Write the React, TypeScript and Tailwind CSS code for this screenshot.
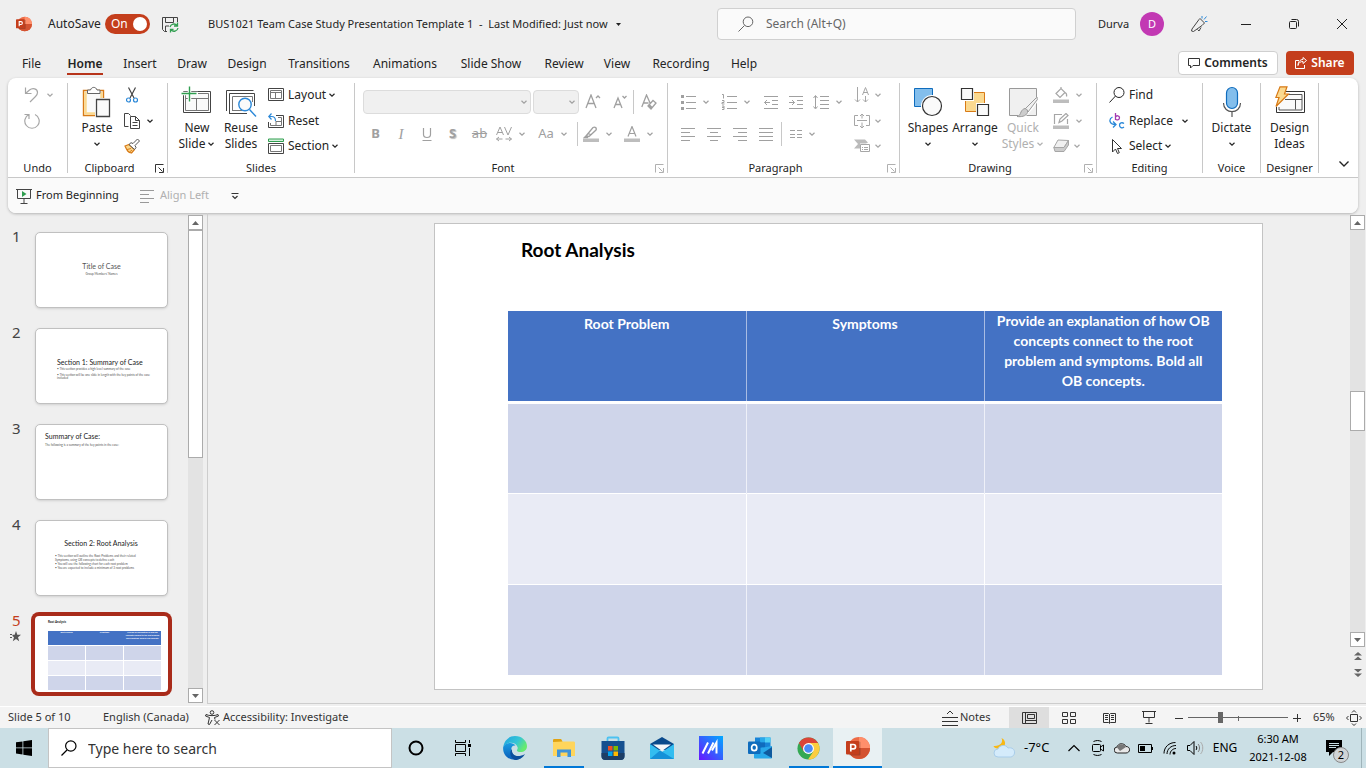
import React from "react";

type IconProps = { w?: number; h?: number; className?: string; children: React.ReactNode };

// stroke icon base, everything in the ribbon is drawn on this
const Icon = ({ w = 16, h = 16, className = "", children }: IconProps) => (
  <svg width={w} height={h} viewBox={`0 0 ${w} ${h}`} fill="none" stroke="currentColor" className={`shrink-0 ${className}`} aria-hidden="true">
    {children}
  </svg>
);

const Chevron = ({ className = "" }: { className?: string }) => (
  <Icon w={8} h={8} className={className}>
    <path d="M1.5 2.8 4 5.2l2.5-2.4" strokeWidth="1.2" />
  </Icon>
);

const Launcher = ({ dim }: { dim?: boolean }) => (
  <button aria-label="More options" className={`w-4 flex items-center justify-end pr-[3px] ${dim ? "text-[#b0b0b0]" : "text-[#333]"}`}>
    <Icon w={9} h={9}>
      <path d="M.5 8.5v-8h8M3.5 3.5l4 4M8.5 4v4.5H4" />
    </Icon>
  </button>
);

const PowerPointLogo = ({ size }: { size: number }) => (
  <svg width={size} height={size} viewBox="0 0 24 24" aria-hidden="true" className="shrink-0">
    <circle cx="13" cy="12" r="11" fill="#ed6c47" />
    <path d="M13 1a11 11 0 0 1 11 11H13z" fill="#ff8f6b" />
    <path d="M2 12h22a11 11 0 0 1-22 0z" fill="#d35230" />
    <rect x="3" y="5.5" width="11.5" height="14" rx="1" fill="#000" opacity=".2" />
    <rect x="0" y="5" width="13" height="13.5" rx="1" fill="#c43e1c" />
    <path d="M4.8 15.5v-7h2.6a2.1 2.1 0 0 1 0 4.3H4.8" fill="none" stroke="#fff" strokeWidth="1.7" />
  </svg>
);

type GroupProps = { label: string; width: string; launcher?: "on" | "dim"; children: React.ReactNode };

const Group = ({ label, width, launcher, children }: GroupProps) => (
  <>
    <section aria-label={label} className={`flex flex-col shrink-0 ${width}`}>
      <div className="flex h-[78px] pt-px">{children}</div>
      <div className="flex h-[18px] text-[11px] leading-[18px]">
        <span className="flex-1 text-center whitespace-nowrap">{label}</span>
        {launcher && <Launcher dim={launcher === "dim"} />}
      </div>
    </section>
    <div className="w-px shrink-0 mt-0.5 mb-1 bg-[#c8c8c8]" />
  </>
);

type BigProps = { icon: React.ReactNode; lines: string[]; width: string; arrow?: boolean; dim?: boolean };

const BigButton = ({ icon, lines, width, arrow, dim }: BigProps) => (
  <button disabled={dim} className={`flex flex-col items-center shrink-0 pt-1 leading-4 whitespace-nowrap ${width} ${dim ? "text-[#b0b0b0]" : ""}`}>
    <span className="flex h-[32px] items-center mb-0.5">{icon}</span>
    <span>{lines[0]}</span>
    <span className="flex h-4 items-center gap-0.5">
      {lines[1]}
      {arrow && <Chevron />}
    </span>
  </button>
);

type SmallProps = { icon: React.ReactNode; text?: string; name?: string; arrow?: boolean; gap?: string; dim?: boolean };

const SmallButton = ({ icon, text, name, arrow, gap = "gap-0.5", dim }: SmallProps) => (
  <button disabled={dim} aria-label={name} className={`flex h-[26px] items-center whitespace-nowrap ${gap} ${dim ? "text-[#a6a6a6]" : ""}`}>
    <span className="flex items-center gap-1">
      {icon}
      {text}
    </span>
    {arrow && <Chevron />}
  </button>
);

const Tool = ({ name, width, children }: { name: string; width: string; children: React.ReactNode }) => (
  <button disabled aria-label={name} className={`flex h-8 shrink-0 items-center justify-center gap-[6px] ${width}`}>
    {children}
  </button>
);

const Rule = () => <div className="w-px h-6 shrink-0 bg-[#c8c8c8]" />;

const tabs = [
  { name: "File", w: "w-[47px]" },
  { name: "Home", w: "w-[60px]" },
  { name: "Insert", w: "w-[50px]" },
  { name: "Draw", w: "w-[54px]" },
  { name: "Design", w: "w-[56px]" },
  { name: "Transitions", w: "w-[88px]" },
  { name: "Animations", w: "w-[84px]" },
  { name: "Slide Show", w: "w-[88px]" },
  { name: "Review", w: "w-[58px]" },
  { name: "View", w: "w-[48px]" },
  { name: "Recording", w: "w-[80px]" },
  { name: "Help", w: "w-[46px]" },
];

const TitleBar = () => (
  <header className="flex h-12 shrink-0 items-center text-[12px]">
    <div className="flex flex-1 items-center pl-4 whitespace-nowrap">
      <PowerPointLogo size={16} />
      <label htmlFor="autosave" className="ml-4 w-[57px]">AutoSave</label>
      <label htmlFor="autosave" className="flex w-[45px] h-5 items-center justify-between rounded-full bg-[#c43e1c] pl-[6px] pr-[3px] text-white">
        On
        <span className="size-[14px] rounded-full bg-white" />
      </label>
      <input id="autosave" type="checkbox" defaultChecked className="sr-only" />
      <button aria-label="Save" className="ml-3 w-[46px]">
        <Icon w={17} h={17}>
          <path d="M15.5 6V1.5H.5v12l2 2H5M3.5 1.5v5h8v-5M3.5 15v-5H7" stroke="#444" />
          <path d="M8 11a4 4 0 0 1 7-1.5M15.5 6.500v3.500h-3.500M16 12a4 4 0 0 1-7 1.800M8.5 16.500V13.500h3" stroke="#2f9e4f" strokeWidth="1.3" />
        </Icon>
      </button>
      <button className="flex items-center gap-2 text-[11px]">
        <span className="whitespace-pre">BUS1021 Team Case Study Presentation Template 1  -  Last Modified: Just now</span>
        <svg width="5" height="3" viewBox="0 0 5 3" aria-hidden="true"><path d="M0 0h5L2.5 3z" fill="#222" /></svg>
      </button>
    </div>
    <div className="flex w-[359px] h-8 items-center gap-3 rounded-[4px] border border-[#d0d0d0] bg-[#fafafa] pl-5 text-[#666]">
      <Icon>
        <circle cx="10" cy="5.8" r="4.8" />
        <path d="m6.5 9.5-6 6" />
      </Icon>
      <input aria-label="Search" placeholder="Search (Alt+Q)" className="flex-1 bg-transparent outline-none placeholder:text-[#666]" />
    </div>
    <div className="flex w-[290px] items-center pl-[22px]">
      <span className="w-[42px] text-[11px]">Durva</span>
      <button aria-label="Account" className="size-6 rounded-full bg-[#c239b3] text-white text-[11px]">D</button>
      <button aria-label="Coming soon" className="ml-[26px] w-[51px]">
        <Icon w={18} h={18}>
          <path d="M10 3.5 14.5 8 12 10.500 3.500 16.500 1.500 16 2 14 9 4.500zM7.500 14.500l1.500 1.500 2-3.500" stroke="#444" />
          <path d="M12 3.5V1M14 4.5l2.500-3M15 6.500h2.500" stroke="#2b88d8" />
        </Icon>
      </button>
      <button aria-label="Minimize" className="w-12"><Icon w={10} h={10}><path d="M0 5.5h10" stroke="#222" /></Icon></button>
      <button aria-label="Restore" className="w-12">
        <Icon w={10} h={10}><path d="M.5 3.5a1 1 0 0 1 1-1h5a1 1 0 0 1 1 1v5a1 1 0 0 1-1 1h-5a1 1 0 0 1-1-1zM2.5.5h5a2 2 0 0 1 2 2v5" stroke="#222" /></Icon>
      </button>
      <button aria-label="Close"><Icon w={10} h={10}><path d="m0 0 10 10M10 0 0 10" stroke="#222" /></Icon></button>
    </div>
  </header>
);

const TabBar = () => (
  <nav className="flex h-[30px] shrink-0 items-start pl-2 pr-3 text-[12px]">
    {tabs.map((t) => (
      <button key={t.name} className={`flex h-[27px] justify-center shrink-0 whitespace-nowrap ${t.w}`}>
        <span className={t.name === "Home" ? "h-[27px] leading-8 border-b-2 border-[#b7341a] font-semibold" : "leading-8"}>{t.name}</span>
      </button>
    ))}
    <div className="flex flex-1 justify-end gap-2 pt-[3px] font-semibold">
      <button className="flex w-[100px] h-6 items-center justify-center gap-1 rounded-[4px] border border-[#cfcfcf] bg-white">
        <Icon w={12} h={12}><path d="M.5 1.5h11v7H5L2.5 11V8.5h-2z" stroke="#333" /></Icon>
        Comments
      </button>
      <button className="flex w-[68px] h-6 items-center justify-center gap-1 rounded-[4px] bg-[#c43e1c] text-white">
        <Icon w={12} h={12}><path d="M4 3.5H.5v8h9V8M3 8.5c.5-3 2.5-4 5-4v2l3.5-3L8 .5v2C5 2.5 3 5 3 8.5z" /></Icon>
        Share
      </button>
    </div>
  </nav>
);

const PasteIcon = () => (
  <Icon w={30} h={32}>
    <path d="M1.5 4.5h20v25h-20z" fill="#fafafa" stroke="#d87a16" strokeWidth="1.4" />
    <path d="M3.5 6v22M19.5 6v22M3.5 27.500h16" stroke="#fbd98f" strokeWidth="2.5" />
    <path d="M5.5 7.5v-3.500h3c1-3.500 5.500-3.500 6.500 0h3v3.500z" fill="#fff" stroke="#666" />
    <path d="M13 12h16v20H13z" fill="#fff" stroke="none" />
    <path d="M14.5 13.5h13v17h-13z" fill="#fafafa" stroke="#444" strokeWidth="1.3" />
  </Icon>
);

const NewSlideIcon = () => (
  <Icon w={32} h={32}>
    <path d="M2.5 5.5h27v21h-27z" stroke="#444" />
    <path d="M4.5 7.5h23v17h-23zM4.5 12.5h23M15.5 12.5v12" fill="#fafafa" stroke="#777" />
    <path d="M8.5 1v16M1 7.5h16" stroke="#fff" strokeWidth="3.5" />
    <path d="M8.5.5v15M.5 7.5h15" stroke="#2f9e4f" strokeWidth="1.4" />
  </Icon>
);

const ReuseIcon = () => (
  <Icon w={32} h={32}>
    <path d="M1.5 25V4.5h27" stroke="#444" />
    <path d="M4 27.5h18M4.5 27V7.5h25V20" stroke="#444" />
    <path d="M7 24.5h10M7.5 24V10.5h20V16" stroke="#777" />
    <circle cx="20" cy="18.5" r="6.2" fill="#fafafa" stroke="#2b88d8" strokeWidth="1.4" />
    <path d="m24.5 23.5 6.500 7" stroke="#2b88d8" strokeWidth="1.4" />
  </Icon>
);

// 4 horizontal strokes, used by the align buttons
const Lines = ({ d }: { d: string }) => (
  <Icon><path d={d} /></Icon>
);

const Ribbon = () => (
  <div className="mx-2 shrink-0 overflow-hidden rounded-lg bg-white text-[12px] text-[#242424] shadow-[0_1px_3px_rgba(0,0,0,0.25)]">
    <div className="flex h-[100px] border-b border-[#c8c8c8] pt-[3px]">
      <Group label="Undo" width="w-[59px]">
        <div className="flex flex-col pl-4">
          <SmallButton dim arrow gap="gap-1.5" name="Undo" icon={<Icon><path d="M1.5.5v6h6M1.5 6.5 5.500 3c3-2.500 8-1.500 8 2.500 0 2-1 3-2 4L6 15" strokeWidth="1.2" /></Icon>} />
          <SmallButton dim name="Redo" icon={<Icon><path d="M.5 1.5H5v4.500M11 1.500a7.200 7.200 0 1 1-6 0" strokeWidth="1.2" /></Icon>} />
        </div>
      </Group>
      <Group label="Clipboard" width="w-[99px]" launcher="on">
        <BigButton width="w-[58px]" icon={<PasteIcon />} lines={["Paste"]} arrow />
        <div className="flex flex-col -ml-0.5">
          <SmallButton name="Cut" icon={<Icon><path d="M4.5.5 10 11M11.5.5 6 11" stroke="#444" strokeWidth="1.2" /><circle cx="4.5" cy="13" r="2" stroke="#2b88d8" strokeWidth="1.2" /><circle cx="11.5" cy="13" r="2" stroke="#2b88d8" strokeWidth="1.2" /></Icon>} />
          <SmallButton arrow gap="gap-1.5" name="Copy" icon={<Icon><path d="M4.5 13.5h-4V.5h4l2 2M6.5 3.5h5l4 4v8h-9zM11.5 3.5v4h4M8.5 9.5h5M8.5 12.5h5" stroke="#444" /></Icon>} />
          <SmallButton name="Format Painter" icon={<Icon><path d="m1 8 4-1.500 5.500 5-3 3.500C4 14.500 3 12.500 1 8z" fill="#fbd98f" stroke="#d87a16" strokeWidth="1.2" /><path d="m5 6.500 2-1.800 2 .8 4.500-4.500 2 2L11 7.500l1 2-1.500 2z" fill="#fff" stroke="#555" /><path d="m3 11.500 4-1M5.500 14l2.500-2" stroke="#d87a16" /></Icon>} />
        </div>
      </Group>
      <Group label="Slides" width="w-[186px]">
        <div className="flex pl-2">
          <BigButton width="w-[42px]" icon={<NewSlideIcon />} lines={["New", "Slide"]} arrow />
          <BigButton width="w-[46px]" icon={<ReuseIcon />} lines={["Reuse", "Slides"]} />
          <div className="flex flex-col pl-1">
            <SmallButton arrow text="Layout" icon={<Icon><path d="M.5 1.5h15v12H.5z" stroke="#444" /><path d="M2.5 3.5h11v8h-11zM2.5 5.5h11M7.5 5.5v6" stroke="#777" /></Icon>} />
            <SmallButton text="Reset" icon={<Icon><path d="M8 2.5h7.500v12H.5V9" stroke="#444" /><path d="M10 4.5h3.500v8h-11V10M8 8.5h5M8 8v4" stroke="#777" /><path d="M3.5.5.8 3.500l2.700 3M1 3.500h2.500c3 0 4 1.500 4 4.500" stroke="#2b88d8" strokeWidth="1.2" /></Icon>} />
            <SmallButton arrow text="Section" icon={<Icon><path d="M.5 1h15v2.500H.5z" fill="#d8f0de" stroke="#2f9e4f" /><path d="M.5 5.5h15v10H.5z" stroke="#444" /><path d="M2.5 7.5h11v6h-11z" stroke="#777" /></Icon>} />
          </div>
        </div>
      </Group>
      <Group label="Font" width="w-[312px]" launcher="dim">
        <div className="flex flex-col pl-2 pt-1 text-[#a0a0a0]">
          <div className="flex h-8 items-center">
            <div className="relative mr-0.5">
              <select disabled aria-label="Font" className="block w-[168px] h-6 appearance-none rounded-[4px] border border-[#dcdcdc] bg-[#f0f0f0]" />
              <Chevron className="absolute right-[3px] top-2" />
            </div>
            <div className="relative">
              <select disabled aria-label="Font size" className="block w-[46px] h-6 appearance-none rounded-[4px] border border-[#dcdcdc] bg-[#f0f0f0]" />
              <Chevron className="absolute right-[3px] top-2" />
            </div>
            <Tool name="Increase font size" width="w-[28px]"><Icon><path d="m1 14 5-13 5 13M2.8 9.5h6.400M11 4l2-2 2 2" strokeWidth="1.3" /></Icon></Tool>
            <Tool name="Decrease font size" width="w-[26px]"><Icon><path d="m2 14 4-10 4 10M3.5 10.500h5M10.500 2l2 2 2-2" strokeWidth="1.3" /></Icon></Tool>
            <Rule />
            <Tool name="Clear formatting" width="w-[30px]"><Icon><path d="m.8 13 4.700-12 4 9M2.500 9h5M7 12l5-5.500 3 2.500-5 6z" strokeWidth="1.3" /><path d="m8.500 10 3 3-1.500 2-3-3z" fill="currentColor" stroke="none" /></Icon></Tool>
          </div>
          <div className="flex h-8 items-center">
            <Tool name="Bold" width="w-[25px]"><b className="text-[13px]">B</b></Tool>
            <Tool name="Italic" width="w-[26px]"><i className="font-['Liberation_Serif'] text-[15px]">I</i></Tool>
            <Tool name="Underline" width="w-[25px]"><Icon w={10} h={14}><path d="M1.5 1v6.500c0 4 7 4 7 0V1M.5 13.500h9" strokeWidth="1.2" /></Icon></Tool>
            <Tool name="Shadow" width="w-[27px]"><b className="text-[13px] [text-shadow:1px_1px_1px_#bbb]">S</b></Tool>
            <Tool name="Strikethrough" width="w-[27px]"><span className="line-through text-[13px]">ab</span></Tool>
            <Tool name="Character spacing" width="w-[36px]">
              <Icon><path d="m.5 9 3.500-8 3.500 8M2 6.500h4M8.500 1l3.500 8 3.500-8M.5 13h6M3 11l-2.500 2L3 15M9.500 13h6M13 11l2.500 2-2.500 2" /></Icon>
              <Chevron />
            </Tool>
            <Tool name="Change case" width="w-[48px]"><span className="text-[13px]">Aa</span><Chevron /></Tool>
            <Rule />
            <Tool name="Highlight" width="w-[40px]">
              <Icon><path d="m3 10 7-8.500c2-1 4 .5 3 2.500L6 10.500zM5 7l3 2M3 10l-1.500 1.500H5" strokeWidth="1.3" /><path d="M0 12.500h16v3.500H0z" fill="#bdbdbd" stroke="none" /></Icon>
              <Chevron />
            </Tool>
            <Tool name="Font colour" width="w-[42px]">
              <Icon><path d="m4 10.500 4-10 4 10M5.500 7.500h5" strokeWidth="1.2" /><path d="M0 12.500h16v3.500H0z" fill="#bdbdbd" stroke="none" /></Icon>
              <Chevron />
            </Tool>
          </div>
        </div>
      </Group>
      <Group label="Paragraph" width="w-[231px]" launcher="dim">
        <div className="flex text-[#a0a0a0]">
          <div className="flex flex-col pl-[10px] pt-1">
            <div className="flex h-8 items-center">
              <Tool name="Bullets" width="w-[34px]"><Icon><path d="M6 2.5h10M6 8.5h10M6 14.5h10" /><path d="M1 1h3v3H1zM1 7h3v3H1zM1 13h3v3H1z" fill="currentColor" stroke="none" /></Icon><Chevron /></Tool>
              <Tool name="Numbering" width="w-[48px]"><Icon><path d="M6 2.5h10M6 8.5h10M6 14.5h10M1 .5h1.500v4M1 6.500h2v2H1v1.500h2.500M1 12h2v3.500H1M1 13.500h2" /></Icon><Chevron /></Tool>
              <Tool name="Decrease indent" width="w-[22px]"><Icon w={14}><path d="M0 2.5h14M8 6.5h6M8 10.5h6M0 14.5h14M6 8.5H.5M3 6 .5 8.500 3 11" /></Icon></Tool>
              <Tool name="Increase indent" width="w-[28px]"><Icon w={14}><path d="M0 2.5h14M8 6.5h6M8 10.5h6M0 14.5h14M0 8.5h5.500M3 6l2.500 2.500L3 11" /></Icon></Tool>
              <Tool name="Line spacing" width="w-[36px]"><Icon><path d="M7 2.5h9M7 6.5h9M7 10.5h9M7 14.5h9M2.5 2v12M.5 4l2-2.500 2 2.500M.5 12.500l2 2.500 2-2.500" /></Icon><Chevron /></Tool>
            </div>
            <div className="flex h-8 items-center">
              <Tool name="Align left" width="w-[20px]"><Lines d="M1 2.5h14M1 6.5h9M1 10.5h14M1 14.5h9" /></Tool>
              <Tool name="Center" width="w-[32px]"><Lines d="M1 2.5h14M4 6.5h8M1 10.5h14M4 14.5h8" /></Tool>
              <Tool name="Align right" width="w-[20px]"><Lines d="M1 2.5h14M6 6.5h9M1 10.5h14M6 14.5h9" /></Tool>
              <Tool name="Justify" width="w-[31px]"><Lines d="M1 2.5h14M1 6.5h14M1 10.5h14M1 14.5h14" /></Tool>
              <Rule />
              <Tool name="Columns" width="w-[42px]"><Icon w={12}><path d="M0 4.5h5M7 4.5h5M0 8.5h5M7 8.5h5M0 11.5h5M7 11.5h5" /></Icon><Chevron /></Tool>
            </div>
          </div>
          <div className="flex flex-col pl-2">
            <SmallButton dim arrow gap="gap-1" name="Text direction" icon={<Icon><path d="M3.5 0v15M1 12.5l2.500 2.500L6 12.500M11.500 9v6M9 12.500l2.500 2.500L14 12.500M8.500 8l3-7.500 3 7.500M9.500 5.500h4" /></Icon>} />
            <SmallButton dim arrow gap="gap-1" name="Align text" icon={<Icon><path d="M4 2.5H.5v10H4M12 2.5h3.500v10H12M3 7.5h10M8 1v4.500M6 3l2-2 2 2M8 9.500V15M6 13l2 2 2-2" /></Icon>} />
            <SmallButton dim arrow gap="gap-1" name="Convert to SmartArt" icon={<Icon><path d="M0 1.5h11l3 3-2 1H6v5H0l4-4.500z" fill="#bbb" stroke="none" /><path d="M6.5 6.5h9v7h-9z" fill="#fff" /><path d="M8 9.5h1M10 9.5h4M8 11.5h1M10 11.5h4" /></Icon>} />
          </div>
        </div>
      </Group>
      <Group label="Drawing" width="w-[196px]" launcher="dim">
        <div className="flex pl-1">
          <BigButton width="w-[48px]" lines={["Shapes"]} arrow icon={<Icon w={30} h={30}><path d="M1.5 1.5h18v18h-18z" fill="#83beec" stroke="#0f6cbd" /><circle cx="19" cy="19" r="11" fill="#fff" stroke="none" /><circle cx="19" cy="19" r="9.5" fill="#fafafa" stroke="#333" strokeWidth="1.2" /></Icon>} />
          <BigButton width="w-[46px]" lines={["Arrange"]} arrow icon={<Icon w={30} h={30}><path d="M5.5 5.5h19v19h-19z" fill="#fbd98f" stroke="#d87a16" /><path d="M0 0h14v14H0zM16 16h14v14H16z" fill="#fff" stroke="none" /><path d="M1.5 1.5h11v11h-11zM17.5 17.5h11v11h-11z" fill="#fafafa" stroke="#333" strokeWidth="1.2" /></Icon>} />
          <BigButton width="w-[50px]" lines={["Quick", "Styles"]} arrow dim icon={<Icon w={30} h={32}><path d="M1.5 2.5h27v27h-27z" fill="#f0f0f0" stroke="#999" /><path d="M8 32C18 22 26 12 30 11c2 2-4 12-12 19z" fill="#fff" stroke="none" /><path d="m17 23 11-11c3-1 2 1 1 2L20 26z" fill="#f0f0f0" stroke="#999" /><path d="M17 22.500c2 .5 3 2 2.500 4C18 30.500 13 31 9 30.500c3-1 3-2 4-4.500 1-2 2-3 4-3.500z" fill="#ccc" stroke="#999" /></Icon>} />
          <div className="flex flex-col pl-[5px]">
            <SmallButton dim arrow gap="gap-1.5" name="Shape fill" icon={<Icon><path d="m3 6.500 5-5 4 4-5 5zM8 2V0M12 5.500c2 1 2 2 1.500 4" strokeWidth="1.2" /><path d="M0 12.500h16v3.500H0z" fill="#bdbdbd" stroke="none" /></Icon>} />
            <SmallButton dim arrow gap="gap-1.5" name="Shape outline" icon={<Icon><path d="M9 1.500H1.500V11M6 9.500l1-3.500 6-5.500 2 2-6 5.500zM14.500 6v5" strokeWidth="1.2" /><path d="M0 12.500h16v3.500H0z" fill="#bdbdbd" stroke="none" /></Icon>} />
            <SmallButton dim arrow gap="gap-1" name="Shape effects" icon={<Icon><path d="m5 2 10.500.5-4.500 7H.8z" fill="#f0f0f0" /><path d="M.8 9.500H11l4.500-7V7L11 13.500H2z" fill="#ccc" /></Icon>} />
          </div>
        </div>
      </Group>
      <Group label="Editing" width="w-[105px]">
        <div className="flex flex-col pl-3">
          <SmallButton text="Find" icon={<Icon><circle cx="10" cy="5.5" r="5" /><path d="m6.500 9-6 6.500" /></Icon>} />
          <SmallButton arrow gap="gap-2" text="Replace" icon={<Icon><path d="M6.5 0v7M6.5 4c1-2 4-1.500 4 .8S7.500 7.500 6.500 6" stroke="#a33ab0" strokeWidth="1.3" /><path d="M3.5 4C-.5 6 0 11.500 6.500 11.500M4 8.500l3 3-3 3M15 10.500c-2-1.500-4.500-.5-4.500 1.800s2.500 3.300 4.500 1.800" stroke="#2b88d8" strokeWidth="1.3" /></Icon>} />
          <SmallButton arrow text="Select" icon={<Icon><path d="M3.5 1.5v12.500l3-3 2 4.500 1.800-.8-1.800-4.200h4z" stroke="#333" /></Icon>} />
        </div>
      </Group>
      <Group label="Voice" width="w-[57px]">
        <BigButton width="w-[57px]" lines={["Dictate"]} arrow icon={<Icon w={20} h={32}><rect x="4.5" y="1.5" width="11" height="21" rx="5.5" fill="#83beec" stroke="#0f6cbd" strokeWidth="1.2" /><path d="M1.5 17c0 11.500 17 11.500 17 0M10 25.500V31" stroke="#555" strokeWidth="1.2" /></Icon>} />
      </Group>
      <Group label="Designer" width="w-[57px]">
        <BigButton width="w-[57px]" lines={["Design", "Ideas"]} icon={<Icon w={30} h={32}><path d="M8 5.5h21.500v21h-28V21" stroke="#333" /><path d="M10 8.500h17v15.500H4V21M10 13.500h17M20.500 13.500v10" stroke="#555" fill="#fafafa" /><path d="M5 .8h7L9.500 8h4L1 20.500 4 11.500H.8z" fill="#fbd98f" stroke="#d87a16" strokeWidth="1.2" /></Icon>} />
      </Group>
      <div className="flex flex-1 items-end justify-end pr-2 pb-2">
        <button aria-label="Ribbon display options"><Icon w={12} h={10}><path d="m1.500 2.500 4.500 4.500 4.500-4.500" strokeWidth="1.4" /></Icon></button>
      </div>
    </div>
    <div className="flex h-[35px] items-center bg-[#fafafa] pl-2 text-[11px]">
      <button className="flex w-[124px] items-center gap-1 whitespace-nowrap">
        <Icon><path d="M0 1.5h16M1.5 1.5v9h13v-9M8 10.5v5M4.5 15.5h7" stroke="#444" /><path d="M6 3v6l4.500-3z" fill="#2f9e4f" stroke="none" /></Icon>
        From Beginning
      </button>
      <button disabled className="flex w-[91px] items-center gap-1 whitespace-nowrap text-[#b0b0b0]">
        <Icon className="text-[#999]"><path d="M0 2.5h14M0 6.5h9M0 10.5h14M0 14.5h9" /></Icon>
        Align Left
      </button>
      <button aria-label="Customize toolbar">
        <Icon w={8} h={8}><path d="M.5 1.5h7M1.5 4 4 6.500 6.500 4" stroke="#333" strokeWidth="1.2" /></Icon>
      </button>
    </div>
  </div>
);

const Arrow = ({ down }: { down?: boolean }) => (
  <button aria-label={down ? "Scroll down" : "Scroll up"} className="flex size-[15px] shrink-0 items-center justify-center border border-[#ababab] bg-white">
    <svg width="7" height="4" viewBox="0 0 7 4" aria-hidden="true"><path d={down ? "M0 0h7L3.5 4z" : "M0 4h7L3.5 0z"} fill="#666" /></svg>
  </button>
);

type ThumbProps = { n: number; active?: boolean; children: React.ReactNode };

const Thumb = ({ n, active, children }: ThumbProps) => (
  <li className="flex h-24 items-start">
    <div className={`w-[35px] pl-3 -mt-[5px] text-[15px] leading-[18px] ${active ? "text-[#c43e1c]" : "text-[#444]"}`}>
      {n}
      {active && (
        <svg width="11" height="11" viewBox="0 0 11 11" className="-ml-0.5 mt-0.5" aria-hidden="true">
          <path d="m6 0 1.300 3.800H11L8 6.300l1.200 4L6 8l-3.200 2.300L4 6.300 2.500 5V3.800h2.200z" fill="#555" />
          <path d="M0 3.5h2M0 6.5h2" stroke="#555" />
        </svg>
      )}
    </div>
    <div className={`w-[133px] h-[76px] overflow-hidden bg-white ${active ? "rounded-[4px] ring-4 ring-[#a92b1a]" : "rounded-[5px] border border-[#c0c0c0] shadow-sm"}`}>
      {children}
    </div>
  </li>
);

const tinyRows = ["bg-[#cfd5ea]", "bg-[#e9ebf5]", "bg-[#cfd5ea]"];

const SlideList = () => (
  <aside className="flex w-[207px] shrink-0 pt-0.5 pb-[3px] overflow-hidden">
    <ol className="w-[188px] pt-[17px] font-['Noto_Sans']">
      <Thumb n={1}>
        <div className="pt-[29px] text-center font-['Lato']">
          <p className="text-[7px] leading-[9px] text-[#555]">Title of Case</p>
          <p className="text-[3px] leading-[6px] text-[#555]">Group Members' Names</p>
        </div>
      </Thumb>
      <Thumb n={2}>
        <div className="pl-[21px] pt-[29px] pr-4 font-['Lato'] text-[3px] leading-[3px] text-[#555]">
          <p className="text-[7px] leading-[9px] text-[#222]">Section 1: Summary of Case</p>
          <p className="mt-px">• This section provides a high level summary of the case</p>
          <p className="mt-[3px]">• This section will be one slide in length with the key points of the case included</p>
        </div>
      </Thumb>
      <Thumb n={3}>
        <div className="pl-[9px] pt-[7px] font-['Lato'] text-[#222]">
          <p className="text-[7px] leading-[9px]">Summary of Case:</p>
          <p className="text-[3px] leading-[8px] text-[#555]">The following is a summary of the key points in the case:</p>
        </div>
      </Thumb>
      <Thumb n={4}>
        <div className="pl-[19px] pt-[18px] pr-6 font-['Lato'] text-[3px] leading-[4px] text-[#555]">
          <p className="mb-[6px] pl-1 text-[7px] leading-[9px] text-center text-[#222]">Section 2: Root Analysis</p>
          <p>• This section will outline the Root Problems and their related Symptoms, using OB concepts to define each</p>
          <p>• You will use the following chart for each root problem</p>
          <p>• You are expected to include a minimum of 3 root problems</p>
        </div>
      </Thumb>
      <Thumb n={5} active>
        <div className="pl-[13px] pr-[7px] pt-1 font-['Lato'] font-bold">
          <p className="text-[3px] leading-[4px] text-[#111]">Root Analysis</p>
          <div className="mt-[7px] grid h-[14px] grid-cols-3 gap-x-px bg-[#4472c4] text-center text-[2px] leading-[3px] text-white">
            <p>Root Problem</p>
            <p>Symptoms</p>
            <p>Provide an explanation of how OB concepts connect to the root problem and symptoms. Bold all OB concepts.</p>
          </div>
          {tinyRows.map((c, i) => (
            <div key={i} className="mt-px grid h-[14px] grid-cols-3 gap-x-px">
              <span className={c} /><span className={c} /><span className={c} />
            </div>
          ))}
        </div>
      </Thumb>
    </ol>
    <div className="flex w-[15px] flex-col bg-[#e3e3e3]">
      <Arrow />
      <div className="h-[228px] border border-[#ababab] bg-white" />
      <div className="flex-1" />
      <Arrow down />
    </div>
  </aside>
);

const Slide = () => (
  <article className="w-[829px] h-[467px] shrink-0 border border-[#c3c3c3] bg-white pl-[73px] pr-10 pt-[14px] font-['Lato',sans-serif]">
    <h1 className="pl-[13px] text-[19px] leading-6 font-bold text-black">Root Analysis</h1>
    <table className="mt-[49px] w-full table-fixed border-collapse">
      <thead>
        <tr className="h-[91px] bg-[#4472c4] text-[14px] leading-5 text-white align-top">
          <th className="border-r border-[#a9bce3] pt-[3px]">Root Problem</th>
          <th className="border-r border-[#a9bce3] pt-[3px]">Symptoms</th>
          <th className="px-[10px]">Provide an explanation of how OB concepts connect to the root problem and symptoms. Bold all OB concepts.</th>
        </tr>
      </thead>
      <tbody>
        <tr className="h-[91px] border-t-3 border-white bg-[#cfd5ea]"><td className="border-r border-[#eef0f8]" /><td className="border-r border-[#eef0f8]" /><td /></tr>
        <tr className="h-[91px] border-t border-white bg-[#e9ebf5]"><td className="border-r border-white" /><td className="border-r border-white" /><td /></tr>
        <tr className="h-[91px] border-t border-white bg-[#cfd5ea]"><td className="border-r border-[#eef0f8]" /><td className="border-r border-[#eef0f8]" /><td /></tr>
      </tbody>
    </table>
  </article>
);

const Workspace = () => (
  <div className="flex min-h-0 flex-1">
    <SlideList />
    <div className="flex min-w-0 flex-1 border-l border-b border-[#cdcdcd] mb-0.5">
      <main className="flex min-w-0 flex-1 justify-end overflow-hidden pt-[10px] pr-[87px]">
        <Slide />
      </main>
      <div className="flex w-4 shrink-0 flex-col pt-0.5 pr-px">
        <Arrow />
        <div className="flex flex-1 flex-col bg-[#e3e3e3] pt-[161px]">
          <div className="h-10 border border-[#ababab] bg-white" />
        </div>
        <Arrow down />
        <div className="flex h-[56px] flex-col items-center gap-[9px] pt-[5px] text-[#666]">
          <button aria-label="Previous slide"><Icon w={8} h={8}><path d="M0 3.5h8L4 0zM0 8h8L4 4.500z" fill="currentColor" stroke="none" /></Icon></button>
          <button aria-label="Next slide"><Icon w={8} h={8}><path d="M0 0h8L4 3.500zM0 4.500h8L4 8z" fill="currentColor" stroke="none" /></Icon></button>
        </div>
      </div>
    </div>
  </div>
);

const StatusBar = () => (
  <footer className="flex h-[22px] shrink-0 items-center border-t border-white bg-[#f4f4f4] pl-2 pr-1 text-[11px] text-[#333] whitespace-nowrap">
    <span className="w-[95px]">Slide 5 of 10</span>
    <button className="w-[102px] text-left">English (Canada)</button>
    <button className="flex items-center gap-0.5">
      <Icon><circle cx="7" cy="2.5" r="1.8" stroke="#333" /><path d="M1 4.5c3 1.500 9 1.500 12 0l.5 1.500-4 1.500.5 2M1 4.500 .5 6l4 1.500L3 14l1.500.5L7 10M9.500 10l5 5M14.500 10l-5 5" stroke="#333" /></Icon>
      Accessibility: Investigate
    </button>
    <div className="flex-1" />
    <button className="flex w-[67px] items-center gap-0.5">
      <Icon><path d="M0 7.5h16M0 11.5h16M0 15.5h16M5 4l3-3 3 3" stroke="#333" /></Icon>
      Notes
    </button>
    <button aria-label="Normal" className="flex w-10 h-full items-center justify-center bg-[#dedede]">
      <Icon w={15} h={12}><path d="M.5.5h14v11H.5zM3.5.5v11M5.5 2.5h7v4h-7zM3.5 8.5h11" stroke="#333" /></Icon>
    </button>
    <button aria-label="Slide Sorter" className="flex w-10 justify-center">
      <Icon w={14} h={12}><path d="M.5.5h5v4h-5zM8.5.5h5v4h-5zM.5 7.5h5v4h-5zM8.5 7.5h5v4h-5z" stroke="#333" /></Icon>
    </button>
    <button aria-label="Reading View" className="flex w-10 justify-center">
      <Icon w={13} h={12}><path d="M.5 1.5h5l1 1 1-1h5v9h-5l-1 1-1-1h-5zM6.5 2v9M2 3.5h3M2 5.5h3M2 7.5h3M8 3.5h3M8 5.5h3M8 7.5h3" stroke="#333" /></Icon>
    </button>
    <button aria-label="Slide Show" className="flex w-10 justify-center">
      <Icon w={14} h={13}><path d="M0 .5h14M1.5.5v6h11v-6M7 6.5v5M3.5 12.5h7" stroke="#333" /></Icon>
    </button>
    <button aria-label="Zoom out" className="ml-[6px] w-[13px]"><Icon w={8} h={8}><path d="M0 4.5h8" stroke="#333" /></Icon></button>
    <div className="relative flex w-[100px] items-center">
      <input
        type="range"
        aria-label="Zoom"
        min={10}
        max={115}
        defaultValue={43}
        className="w-full h-3 appearance-none bg-transparent [&::-webkit-slider-runnable-track]:h-px [&::-webkit-slider-runnable-track]:bg-[#666] [&::-webkit-slider-thumb]:appearance-none [&::-webkit-slider-thumb]:w-[5px] [&::-webkit-slider-thumb]:h-[11px] [&::-webkit-slider-thumb]:-mt-[5px] [&::-webkit-slider-thumb]:bg-[#666]"
      />
      <span className="absolute left-1/2 top-1 w-px h-[5px] bg-[#666]" />
    </div>
    <button aria-label="Zoom in" className="ml-[5px] w-5"><Icon w={8} h={8}><path d="M0 4.5h8M4.5 0v8" stroke="#333" /></Icon></button>
    <button className="w-[33px] text-left">65%</button>
    <button aria-label="Fit slide to window" className="shrink-0">
      <Icon w={16} h={16}><path d="M4.5 4.500h7v7h-7zM6 2.500l2-2 2 2M6 13.500l2 2 2-2M2.500 6l-2 2 2 2M13.500 6l2 2-2 2" stroke="#333" /></Icon>
    </button>
  </footer>
);

type AppProps = { name: string; state?: "running" | "current"; children: React.ReactNode };

const TaskApp = ({ name, state, children }: AppProps) => (
  <button aria-label={name} className={`flex w-[49px] h-10 shrink-0 flex-col items-center ${state === "current" ? "bg-[#e9f1f3]" : ""}`}>
    <span className="flex h-[38px] items-center pt-0.5">{children}</span>
    {state && <span className={`h-0.5 bg-[#0078d7] ${state === "current" ? "w-full" : "w-10"}`} />}
  </button>
);

const Taskbar = () => (
  <div className="flex h-10 shrink-0 items-center bg-[#cbdfe5] text-black">
    <button aria-label="Start" className="flex w-12 justify-center">
      <svg width="16" height="16" viewBox="0 0 16 16" aria-hidden="true"><path d="M0 2.3 6.5 1.4v6.100H0zM7.3 1.3 16 0v7.500H7.300zM0 8.300h6.500v6.200L0 13.600zM7.300 8.300H16V16l-8.700-1.300z" /></svg>
    </button>
    <div className="flex w-[344px] h-10 items-center gap-[11px] border border-[#c4c4c4] bg-white pl-3">
      <Icon><circle cx="9.8" cy="6" r="5.2" strokeWidth="1.2" /><path d="M6 10 .5 15.500" strokeWidth="1.2" /></Icon>
      <input aria-label="Type here to search" placeholder="Type here to search" className="flex-1 text-[14px] outline-none placeholder:text-[#333]" />
    </div>
    <button aria-label="Cortana" className="flex w-12 justify-center"><Icon><circle cx="8" cy="8" r="6.5" strokeWidth="2" /></Icon></button>
    <button aria-label="Task View" className="flex w-[50px] justify-center pr-1">
      <Icon w={16} h={16}><path d="M.5 0v2.500h10V0M.5 4.500h10v7H.5zM.5 16v-2.500h10V16M14.500 0v3M14.500 8v8" /><path d="M13 4h3v3h-3z" fill="currentColor" stroke="none" /></Icon>
    </button>
    <TaskApp name="Edge">
      <svg width="24" height="24" viewBox="0 0 24 24" aria-hidden="true">
        <defs>
          <linearGradient id="edgeTop" x1="0" y1="0" x2="1" y2=".5"><stop offset="0" stopColor="#1fa2e0" /><stop offset=".6" stopColor="#35c5d6" /><stop offset="1" stopColor="#66eb6e" /></linearGradient>
          <linearGradient id="edgeLow" x1="0" y1="0" x2="0" y2="1"><stop offset="0" stopColor="#1b9de2" /><stop offset="1" stopColor="#0a5cb8" /></linearGradient>
        </defs>
        <path d="M.3 11C1 4.500 6 0 12 0c7 0 12 5 12 10 0 4-3 6-6.500 6-3 0-4-1-3.500-2 .8-1 .9-2 .5-3C13 6 4 5 .3 11z" fill="url(#edgeTop)" />
        <path d="M.2 11C3 6 10 6 12.500 9.500 8 9 7 14 10 18c2 3 6 4 9 3.500C11 27-1 22 .2 11z" fill="url(#edgeLow)" />
        <path d="M9 13c-1 7 6 9 13 5-2 3.500-5.500 6-10 6C7 22 6 16 9 13z" fill="#0c4f9c" />
      </svg>
    </TaskApp>
    <TaskApp name="File Explorer" state="running">
      <svg width="22" height="19" viewBox="0 0 22 19" aria-hidden="true">
        <path d="M0 1.500C0 .5.500 0 1.500 0H8l1.500 2.500H20.500c1 0 1.500.5 1.500 1.500v13H0z" fill="#ffd55c" />
        <path d="M0 1.500C0 .5.500 0 1.500 0H8l1.500 2.500L0 3z" fill="#e0a212" />
        <path d="M4 18v-7.500h14V18h-3.500v-4.500h-7V18z" fill="#3f94d9" />
      </svg>
    </TaskApp>
    <TaskApp name="Microsoft Store">
      <svg width="24" height="24" viewBox="0 0 24 24" aria-hidden="true">
        <path d="M6.500 6V2.500c0-.6.400-1 1-1h9c.6 0 1 .4 1 1V6" fill="none" stroke="#4cc2f1" strokeWidth="1.8" />
        <path d="M.5 5h23v15a4 4 0 0 1-4 4h-15a4 4 0 0 1-4-4z" fill="#16508f" />
        <path d="M.5 17h23v3a4 4 0 0 1-4 4h-15a4 4 0 0 1-4-4z" fill="#1d3e66" />
        <path d="M7 10h4.500v4.500H7z" fill="#f25022" /><path d="M12.500 10H17v4.500h-4.500z" fill="#7fba00" /><path d="M7 15.500h4.500V20H7z" fill="#00a4ef" /><path d="M12.500 15.500H17V20h-4.500z" fill="#ffb900" />
      </svg>
    </TaskApp>
    <TaskApp name="Mail">
      <svg width="24" height="24" viewBox="0 0 24 24" aria-hidden="true">
        <path d="M0 8 12 1l12 7v6H0z" fill="#0a4a8c" /><path d="M3 8.500h18L12 15z" fill="#f5f7f9" /><path d="M0 8v15h24V8l-12 8z" fill="#33bdf0" /><path d="M0 23h24L10 14.500z" fill="#1691d8" />
      </svg>
    </TaskApp>
    <TaskApp name="MyASUS">
      <svg width="24" height="24" viewBox="0 0 24 24" aria-hidden="true">
        <defs><linearGradient id="asus" x1="0" y1="1" x2="1" y2="0"><stop offset="0" stopColor="#6a14ff" /><stop offset="1" stopColor="#00aaff" /></linearGradient></defs>
        <path d="M0 0h24v24H0z" fill="url(#asus)" /><path d="m3.500 17.500 5.500-11M9 17.500l5.500-11M13 14.500l4.500-8v11" fill="none" stroke="#fff" strokeWidth="2" />
      </svg>
    </TaskApp>
    <TaskApp name="Outlook">
      <svg width="24" height="24" viewBox="0 0 24 24" aria-hidden="true">
        <path d="M7 1.500h15.500V14H7z" fill="#1784d8" /><path d="M12 1.500h5v5h-5z" fill="#28a8ea" /><path d="M17 1.500h5.500v5H17z" fill="#50d0f5" /><path d="M12 6.500h5v5h-5z" fill="#0f6cbd" />
        <path d="M6 13 24 10v11.500c0 .6-.4 1-1 1H7c-.6 0-1-.4-1-1z" fill="#28a8ea" /><path d="m24 11-9 6 9 5z" fill="#0f5a9e" />
        <rect y="5.5" width="12.5" height="12.5" rx="1" fill="#0f6cbd" /><ellipse cx="6.2" cy="11.7" rx="2.6" ry="3" fill="none" stroke="#fff" strokeWidth="1.7" />
      </svg>
    </TaskApp>
    <TaskApp name="Chrome" state="running">
      <svg width="23" height="23" viewBox="0 0 24 24" aria-hidden="true">
        <circle cx="12" cy="12" r="11.5" fill="#34a853" />
        <path d="M2 6.300A11.500 11.500 0 0 1 22 6.300H12L7 15z" fill="#dc4437" />
        <path d="M12 6.300h10A11.500 11.500 0 0 1 11.500 23.500L17 15z" fill="#fbcd3f" />
        <circle cx="12" cy="12" r="5.7" fill="#fff" /><circle cx="12" cy="12" r="4.5" fill="#4c8bf5" />
      </svg>
    </TaskApp>
    <TaskApp name="PowerPoint" state="current"><PowerPointLogo size={24} /></TaskApp>
    <div className="flex-1" />
    <button className="flex w-[70px] items-center gap-2 text-[13px] whitespace-nowrap">
      <svg width="24" height="20" viewBox="0 0 24 20" className="shrink-0" aria-hidden="true">
        <path d="M9.500 0c2 4-1 8.500-8 8 1 3 7 4 10 1 3-3 1.500-7.500-2-9z" fill="#f8b816" />
        <path d="M6 19a4 4 0 0 1 0-8c1-4 8-5 10-1 4-1 7 1.500 6.500 5S19 19 18 19z" fill="#d4ebfb" stroke="#a9cdea" />
      </svg>
      -7°C
    </button>
    <button aria-label="Show hidden icons" className="flex w-6 justify-center"><Icon w={12} h={8}><path d="m.5 7 5.500-5.500L11.500 7" strokeWidth="1.2" /></Icon></button>
    <button aria-label="Meet Now" className="flex w-6 justify-center"><Icon><path d="M3.5 4.5h6a1 1 0 0 1 1 1v5a1 1 0 0 1-1 1h-6a1 1 0 0 1-1-1v-5a1 1 0 0 1 1-1zM10.500 7l3-2v6l-3-2M3.500 1.500c3-1.300 5-1.300 8 0M3.500 14.500c3 1.300 5 1.300 8 0" /></Icon></button>
    <button aria-label="OneDrive" className="flex w-6 justify-center"><Icon><path d="M3.5 13A3 3 0 0 1 3 7c1-4 7-4.500 9-.5 5 0 4.500 6.500 0 6.500z" fill="#e8e8e8" stroke="#222" /><path d="M3 7.500c1-4 7-4.500 9-.5L6 11z" fill="#777" stroke="none" /></Icon></button>
    <button aria-label="Battery" className="flex w-6 justify-center"><Icon><path d="M.5 4.5h13v8H.5zM14.5 7v3" /><path d="M2 6h5v5H2z" fill="currentColor" stroke="none" /></Icon></button>
    <button aria-label="Network" className="flex w-6 justify-center"><Icon w={14} h={14}><path d="M1 12.500C1 6 6 1.500 12.500 1.500M4 13c0-5 4-8.500 9-8.500M7 13.500C7 10 10 7.500 13 7.500" /><circle cx="11" cy="12" r="1.5" fill="currentColor" stroke="none" /></Icon></button>
    <button aria-label="Volume" className="flex w-[26px] justify-center"><Icon w={17}><path d="M.5 5.5h2.500l4-4v13l-4-4H.5zM9 6c1 1 1 3 0 4" /><path d="M11 4c2 2 2 6 0 8" stroke="#777" /><path d="M13.500 2c3 3 3 9 0 12" stroke="#aaa" /></Icon></button>
    <button className="w-[34px] text-[12px]">ENG</button>
    <button className="w-[72px] text-[11px] leading-[18px] whitespace-nowrap">6:30 AM<br />2021-12-08</button>
    <button aria-label="Notifications" className="relative ml-2 w-[39px] h-6">
      <Icon w={16} h={16} className="absolute left-1 top-1"><path d="M0 0h16v12H7l-4 4v-4H0z" fill="#000" stroke="none" /><path d="M3 3.5h10M3 5.5h10M3 7.5h7" stroke="#cbdfe5" /></Icon>
      <span className="absolute left-[11px] top-[11px] size-4 rounded-full border border-[#888] bg-[#d0d4d6] text-[11px] leading-[14px]">2</span>
    </button>
    <div className="h-10 w-[5px] border-l border-[#9fb4ba]" />
  </div>
);

export default function App() {
  return (
    <div className="flex h-screen flex-col overflow-hidden bg-[#efefef] font-['Noto_Sans',sans-serif] text-[#242424]">
      <TitleBar />
      <TabBar />
      <Ribbon />
      <Workspace />
      <StatusBar />
      <Taskbar />
    </div>
  );
}
